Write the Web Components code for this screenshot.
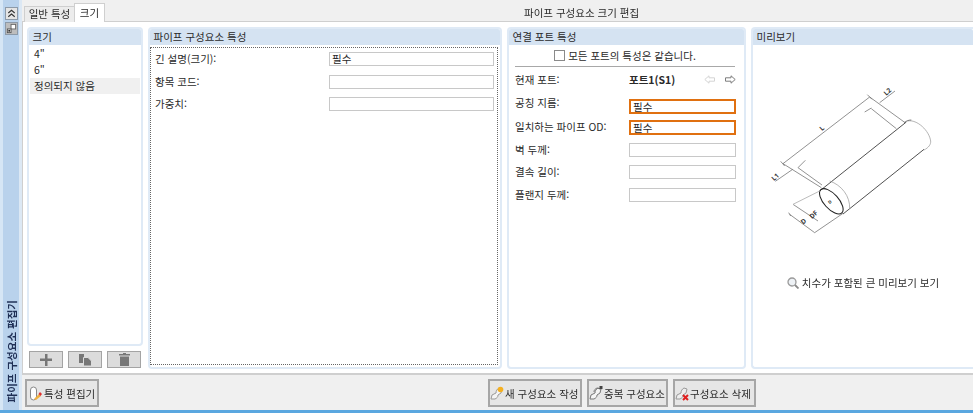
<!DOCTYPE html>
<html lang="ko">
<head>
<meta charset="utf-8">
<title>파이프 구성요소 편집기</title>
<style>
  html, body { margin: 0; height: 100%; overflow: hidden; background: #f0f0f0; }
  body { font: 10.5px "Noto Sans CJK KR", "Noto Sans", sans-serif; color: #2a2a2a; }
</style>
</head>
<body>
<editor-shell>
  <side-rail slot="rail"></side-rail>

  <tab-strip slot="tabs"></tab-strip>

  <group-panel slot="sizes" heading="크기">
    <size-list></size-list>
  </group-panel>
  <size-tools slot="size-tools"></size-tools>

  <group-panel slot="props" heading="파이프 구성요소 특성">
    <dotted-box>
      <field-row label="긴 설명(크기):" value="필수"></field-row>
      <field-row label="항목 코드:"></field-row>
      <field-row label="가중치:"></field-row>
    </dotted-box>
  </group-panel>

  <group-panel slot="ports" heading="연결 포트 특성">
    <port-form></port-form>
  </group-panel>

  <group-panel slot="preview" heading="미리보기" open-right>
    <pipe-preview></pipe-preview>
  </group-panel>

  <tool-button slot="left-actions" icon="edit" width="74" style="padding-left:2px">특성 편집기</tool-button>
  <tool-button slot="mid-actions" icon="new" width="94">새 구성요소 작성</tool-button>
  <tool-button slot="mid-actions" icon="copy" width="81">중복 구성요소</tool-button>
  <tool-button slot="mid-actions" icon="del" width="83">구성요소 삭제</tool-button>
</editor-shell>

<script>
class EditorShell extends HTMLElement {
  connectedCallback() {
    this.attachShadow({ mode: 'open' });
    this.shadowRoot.innerHTML = `
      <style>
        :host { display: grid; grid-template-columns: 22px 1fr; grid-template-rows: 1fr 3px; height: 413px; width: 973px; filter: blur(.3px); }
        .main { display: flex; flex-direction: column; min-width: 0; }
        .body {
          height: 354px; box-sizing: border-box; background: #fff;
          border: 1px solid #cfcfcf; border-right: 0; border-bottom-width: 2px;
          padding: 5px 0 4px 4px; flex: none;
          display: grid; grid-template-columns: 116px 354px 239px 222px; column-gap: 5px;
        }
        .sizes-col { display: flex; flex-direction: column; min-height: 0; }
        .actions { flex: 1; display: flex; align-items: flex-start; padding: 4px 0 0 3px; }
        .mid { display: flex; gap: 5px; margin-left: 389px; }
        .bottom { grid-column: 1 / 3; background: #5aa7e0; }
      </style>
      <slot name="rail"></slot>
      <div class="main">
        <slot name="tabs"></slot>
        <div class="body">
          <div class="sizes-col">
            <slot name="sizes"></slot>
            <slot name="size-tools"></slot>
          </div>
          <slot name="props"></slot>
          <slot name="ports"></slot>
          <slot name="preview"></slot>
        </div>
        <div class="actions">
          <slot name="left-actions"></slot>
          <div class="mid"><slot name="mid-actions"></slot></div>
        </div>
      </div>
      <div class="bottom"></div>
    `;
  }
}

class SideRail extends HTMLElement {
  connectedCallback() {
    this.attachShadow({ mode: 'open' });
    this.shadowRoot.innerHTML = `
      <style>
        :host { display: flex; flex-direction: column; align-items: center; box-sizing: border-box;
          background: #b9d2ec; border-left: 3px solid #d6e6f5; border-right: 3px solid #dce8f4; padding: 7px 0 8px; }
        .btn { width: 13px; height: 13px; box-sizing: border-box; border: 1px solid #8d9aa8; background: #e4e4e4; margin-bottom: 2px; display: block; }
        .btn.dark { background: #bdbdbd; }
        .title { margin-top: auto; writing-mode: vertical-rl; text-orientation: sideways; transform: rotate(180deg);
          font-size: 10.5px; font-weight: 700; color: #1f2f55; white-space: nowrap; }
      </style>
      <svg class="btn" viewBox="0 0 12 12" fill="none" stroke="#333" stroke-width="1.2">
        <path d="M2.5 5.5 6 2.5l3.5 3M2.5 9.5 6 6.500l3.500 3"/>
      </svg>
      <svg class="btn dark" viewBox="0 0 12 12">
        <rect x="5.500" y="1.500" width="5" height="5" fill="#fff" stroke="#666"/>
        <rect x="1.500" y="6.500" width="4" height="4" fill="#fff" stroke="#555"/>
        <rect x="2.500" y="7.500" width="2" height="2" fill="#333"/>
      </svg>
      <span class="title">파이프 구성요소 편집기</span>
    `;
  }
}

class TabStrip extends HTMLElement {
  connectedCallback() {
    this.attachShadow({ mode: 'open' });
    this.shadowRoot.innerHTML = `
      <style>
        :host { display: flex; align-items: flex-end; height: 22px; padding-left: 2px; box-sizing: border-box; position: relative; margin-bottom: -1px; z-index: 1; }
        .tab { box-sizing: border-box; border: 1px solid #cfcfcf; border-bottom: 0; text-align: center; white-space: nowrap; }
        .off { width: 50px; height: 16px; line-height: 14px; background: #ececec; border-right: 0; }
        .on { width: 31px; height: 19px; line-height: 18px; background: #fff; }
        .title { flex: 1; align-self: center; padding: 2px 0 0 419px; white-space: nowrap; }
      </style>
      <div class="tab off">일반 특성</div>
      <div class="tab on">크기</div>
      <div class="title">파이프 구성요소 크기 편집</div>
    `;
  }
}

class GroupPanel extends HTMLElement {
  connectedCallback() {
    this.attachShadow({ mode: 'open' });
    this.shadowRoot.innerHTML = `
      <style>
        :host { display: flex; flex-direction: column; box-sizing: border-box; min-height: 0; min-width: 0;
          border: 2px solid #dfeaf6; border-radius: 4px; background: #fff; height: 100%; }
        :host([open-right]) { border-right: 0; border-radius: 4px 0 0 4px; }
        .head { height: 16px; line-height: 15px; background: #d5e3f2; padding-left: 3.5px; white-space: nowrap; flex: none; border-radius: 2px 2px 0 0; }
        .inner { flex: 1; min-height: 0; display: flex; flex-direction: column; }
      </style>
      <div class="head">${this.getAttribute('heading')}</div>
      <div class="inner"><slot></slot></div>
    `;
  }
}

class SizeList extends HTMLElement {
  connectedCallback() {
    this.attachShadow({ mode: 'open' });
    this.shadowRoot.innerHTML = `
      <style>
        :host { display: block; padding: 1px 0 0 1px; }
        div { height: 16px; line-height: 16px; padding-left: 4px; }
        .sel { background: #f0f0f0; margin-right: 1px; }
      </style>
      <div>4"</div>
      <div>6"</div>
      <div class="sel">정의되지 않음</div>
    `;
  }
}

class SizeTools extends HTMLElement {
  connectedCallback() {
    this.attachShadow({ mode: 'open' });
    this.shadowRoot.innerHTML = `
      <style>
        :host { display: flex; gap: 5px; padding: 5px 0 0 2px; flex: none; box-sizing: border-box; height: 23px; }
        button { width: 34px; height: 17px; padding: 0; box-sizing: border-box; border: 1px solid #a4a4a4; background: #dcdcdc; display: flex; align-items: center; justify-content: center; }
      </style>
      <button aria-label="추가"><svg width="12" height="12" viewBox="0 0 12 12"><path d="M5 0h2.500v4.500H12V7H7.500v5H5V7H0V4.500h5z" fill="#777"/></svg></button>
      <button aria-label="복사"><svg width="14" height="12" viewBox="0 0 14 12"><path d="M1 0h5v9H1z" fill="#777"/><path d="M5.500 3.500h4.500l3.500 3.500v5h-8z" fill="#777" stroke="#dcdcdc"/></svg></button>
      <button aria-label="삭제"><svg width="11" height="13" viewBox="0 0 11 13" fill="#777"><path d="M4 0h3v1h4v1.500H0V1h4z"/><path d="M1 3.500h9V13H1z"/></svg></button>
    `;
  }
}

class DottedBox extends HTMLElement {
  connectedCallback() {
    this.attachShadow({ mode: 'open' });
    this.shadowRoot.innerHTML = `
      <style>
        :host { display: flex; flex-direction: column; flex: 1; margin: 2px 2px 2px 0; box-sizing: border-box;
          border: 1px dotted #666; padding: 4px 3px 0 4px; --box-width: 165px; }
      </style>
      <slot></slot>
    `;
  }
}

class FieldRow extends HTMLElement {
  connectedCallback() {
    this.attachShadow({ mode: 'open' });
    const value = this.getAttribute('value') || '';
    const cls = this.hasAttribute('required') ? 'box req' : 'box';
    this.shadowRoot.innerHTML = `
      <style>
        :host { display: flex; align-items: flex-start; height: 22.5px; }
        .label { flex: 1; line-height: 14px; white-space: nowrap; }
        .box { width: var(--box-width, 165px); height: 14px; box-sizing: border-box; border: 1px solid #c8c8c8; background: #fff; line-height: 12px; padding-left: 2px; }
        .req { border: 2px solid #e07010; height: 15px; line-height: 11px; margin-top: var(--box-nudge, 0px); }
      </style>
      <span class="label">${this.getAttribute('label')}</span>
      <div class="${cls}">${value}</div>
    `;
  }
}

class PortForm extends HTMLElement {
  connectedCallback() {
    this.attachShadow({ mode: 'open' });
    this.shadowRoot.innerHTML = `
      <style>
        :host { display: block; padding: 0 8px 0 6px; --box-width: 107px; }
        .all { display: flex; justify-content: center; align-items: center; gap: 3px; height: 21px; border-bottom: 1px solid #a8a8a8; margin-bottom: 6px; width: 220px; }
        .all i { width: 11px; height: 11px; border: 1px solid #8a8a8a; box-sizing: border-box; display: block; }
        .cur { display: flex; height: 23px; line-height: 14px; }
        .cur span:first-child { flex: none; width: 114px; }
        .cur b { flex: none; width: 75px; font-weight: 700; }
        .cur svg { flex: none; margin: 2px 10px 0 0; }
      </style>
      <div class="all"><i></i><span>모든 포트의 특성은 같습니다.</span></div>
      <div class="cur">
        <span>현재 포트:</span><b>포트1(S1)</b>
        <svg width="11" height="9" viewBox="0 0 11 9" fill="none" stroke="#d4d4d4"><path d="M.8 4.500 5 .8v2h5.500v3.400H5v2z"/></svg>
        <svg width="11" height="9" viewBox="0 0 11 9" fill="none" stroke="#7c7c7c"><path d="M10.200 4.500 6 .8v2H.5v3.400H6v2z"/></svg>
      </div>
      <field-row label="공칭 지름:" value="필수" required style="height:24px;--box-nudge:3px"></field-row>
      <field-row label="일치하는 파이프 OD:" value="필수" required></field-row>
      <field-row label="벽 두께:"></field-row>
      <field-row label="결속 길이:"></field-row>
      <field-row label="플랜지 두께:"></field-row>
    `;
  }
}

class PipePreview extends HTMLElement {
  connectedCallback() {
    this.attachShadow({ mode: 'open' });
    this.shadowRoot.innerHTML = `
      <style>
        :host { display: flex; flex-direction: column; align-items: center; padding-top: 41px; }
        svg.pipe { display: block; width: 170px; height: 166px; margin-left: -20px; overflow: visible; }
        .zoom { display: flex; align-items: center; gap: 3px; margin-top: 23px; white-space: nowrap; }
      </style>
      <svg class="pipe" viewBox="60 50 510 498" fill="none" stroke="#6a6a6a" stroke-width="2.200">
        <path d="M215 365 475 158M285 434 528 240" stroke="#444" stroke-width="2.800"/>
        <ellipse cx="250" cy="396" rx="47" ry="22" transform="rotate(48 250 396)" stroke="#222" stroke-width="3.200"/>
        <path d="M245 335c35 12 62 45 60 84M478 155c30-6 66 30 70 60 1 10-6 20-20 27" stroke="#999"/>
        <path d="M468 160c8-6 15-8 22-8" stroke="#555"/>
        <path d="M105 283 365 83M98 276l12 14M358 76l14 14M365 83l105 76M350 128l20-12M370 118l75 60"/>
        <path d="M105 283l115 72M150 295l22-22M150 295l72 52M82 336l52-36M395 100l46-35"/>
        <path d="M125 435l75 55 85-58M122 430l6 10M135 405l75 50"/>
        <path d="M135 405l80-40" stroke="#bbb" stroke-width="3"/>
        <g fill="#333" stroke="none" font-family="Noto Sans, sans-serif" font-size="20" font-weight="700">
          <text transform="translate(222 186) rotate(-42)">L</text>
          <text transform="translate(78 336) rotate(-42)">L1</text>
          <text transform="translate(415 80) rotate(-42)">L2</text>
          <text transform="translate(166 466) rotate(-42)">D</text>
          <text transform="translate(192 450) rotate(-42)">DF</text>
          <text transform="translate(245 405) rotate(-42)" font-size="13">D</text>
        </g>
      </svg>
      <div class="zoom">
        <svg width="12" height="12" viewBox="0 0 12 12" fill="none"><circle cx="5" cy="5" r="4" stroke="#9a9a9a" stroke-width="1.300" fill="#eef2f6"/><path d="M8 8l3.500 3.500" stroke="#8a8a8a" stroke-width="1.800"/></svg>
        <span>치수가 포함된 큰 미리보기 보기</span>
      </div>
    `;
  }
}

// small elbow fitting shared by the action buttons
const ELBOW = 'M1 13 2 9l4-2c0-2 1-4 3-5l3 1-1 4-3 2c0 2-1 3-3 4z';
const TOOL_ICONS = {
  edit: '<rect x="1.500" y="1" width="6" height="13" rx="3" fill="#fff" stroke="#888"/><path d="M5 13l5-5 2 2-5 4z" fill="#f0b040"/><path d="M9.500 8l1.500-2 2 2-1.500 2z" fill="#e03030"/>',
  new: `<path d="${ELBOW}" fill="#f4f4f4" stroke="#999"/><circle cx="10.500" cy="3.500" r="2.800" fill="#f5b020"/>`,
  copy: `<path d="${ELBOW}" fill="#f4f4f4" stroke="#777"/><path d="M5 6c0-2 1-3 3-4l3 1" fill="none" stroke="#777"/><rect x="10.500" y="0" width="3" height="3" fill="#444"/>`,
  del: `<path d="${ELBOW}" fill="#eee" stroke="#999"/><path d="M8 9l5 5M13 9l-5 5" stroke="#e02020" stroke-width="2"/>`
};

class ToolButton extends HTMLElement {
  connectedCallback() {
    this.attachShadow({ mode: 'open' });
    const icon = TOOL_ICONS[this.getAttribute('icon')];
    this.shadowRoot.innerHTML = `
      <style>
        :host { display: flex; align-items: center; gap: 1px; box-sizing: border-box; height: 28px;
          width: ${this.getAttribute('width')}px; border: 2px solid #a6a6a6; background: #e6e6e6; white-space: nowrap; }
        svg { flex: none; }
      </style>
      <svg width="14" height="15" viewBox="0 0 14 15">${icon}</svg>
      <slot></slot>
    `;
  }
}

customElements.define('editor-shell', EditorShell);
customElements.define('side-rail', SideRail);
customElements.define('tab-strip', TabStrip);
customElements.define('group-panel', GroupPanel);
customElements.define('size-list', SizeList);
customElements.define('size-tools', SizeTools);
customElements.define('dotted-box', DottedBox);
customElements.define('field-row', FieldRow);
customElements.define('port-form', PortForm);
customElements.define('pipe-preview', PipePreview);
customElements.define('tool-button', ToolButton);
</script>
</body>
</html>
